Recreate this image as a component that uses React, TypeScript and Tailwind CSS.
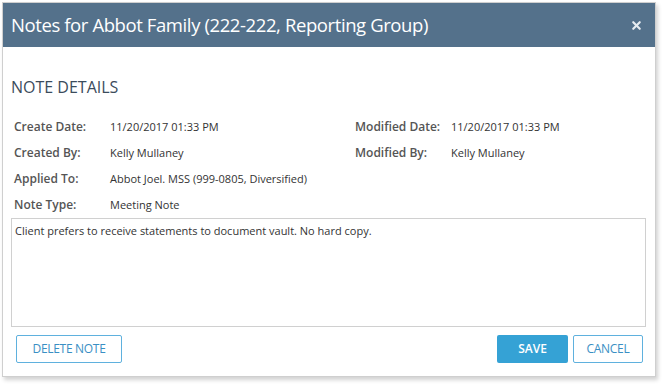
import { X } from 'lucide-react'

const font = { fontFamily: '"Open Sans", "Noto Sans", sans-serif' }

function Field({ label, value }: { label: string; value: string }) {
  return (
    <div className="flex items-center h-[26px]">
      <span className="w-[96px] text-[12px] font-semibold text-[#555555]">{label}</span>
      <span className="text-[11px] text-[#333333]">{value}</span>
    </div>
  )
}

export default function App() {
  return (
    <div className="w-[667px] h-[387px] bg-white pt-[2px] pl-[2px]" style={font}>
      <div className="w-[654px] h-[375px] border border-[#cfcfcf] shadow-[2px_3px_4px_rgba(0,0,0,0.18)] bg-white flex flex-col">
        <div className="h-[44px] bg-[#54718b] flex items-center justify-between pl-[8px] pr-[12px]">
          <h1 className="text-[18.5px] text-white tracking-[-0.4px]">
            Notes for Abbot Family (222-222, Reporting Group)
          </h1>
          <X className="w-[13px] h-[13px] text-[#e6ebf0]" strokeWidth={4} />
        </div>

        <div className="px-[8px] flex flex-col flex-1">
          <h2 className="mt-[30px] text-[16px] text-[#3b4c5c] leading-[20px]">NOTE DETAILS</h2>

          <div className="mt-[17px] pl-[3px] flex">
            <div className="w-[341px]">
              <Field label="Create Date:" value="11/20/2017 01:33 PM" />
              <Field label="Created By:" value="Kelly Mullaney" />
              <Field label="Applied To:" value="Abbot Joel. MSS (999-0805, Diversified)" />
              <Field label="Note Type:" value="Meeting Note" />
            </div>
            <div>
              <Field label="Modified Date:" value="11/20/2017 01:33 PM" />
              <Field label="Modified By:" value="Kelly Mullaney" />
            </div>
          </div>

          <div className="mt-0 w-[635px] h-[109px] border border-[#d0d0d0] px-[3px] py-[4px] text-[11px] text-[#333333]">
            Client prefers to receive statements to document vault. No hard copy.
          </div>

          <div className="mt-[8px] flex items-center justify-between pl-[5px] pr-[4px]">
            <button className="h-[28px] w-[106px] border border-[#5fb1de] rounded-[2px] text-[12px] text-[#3a8fc4] tracking-[-0.3px]">
              DELETE NOTE
            </button>
            <div className="flex gap-[5px]">
              <button className="h-[28px] w-[71px] bg-[#35a2d5] rounded-[2px] text-[12px] font-semibold text-white">
                SAVE
              </button>
              <button className="h-[28px] w-[70px] border border-[#5fb1de] rounded-[2px] text-[12px] text-[#3a8fc4] tracking-[-0.3px]">
                CANCEL
              </button>
            </div>
          </div>
        </div>
      </div>
    </div>
  )
}
